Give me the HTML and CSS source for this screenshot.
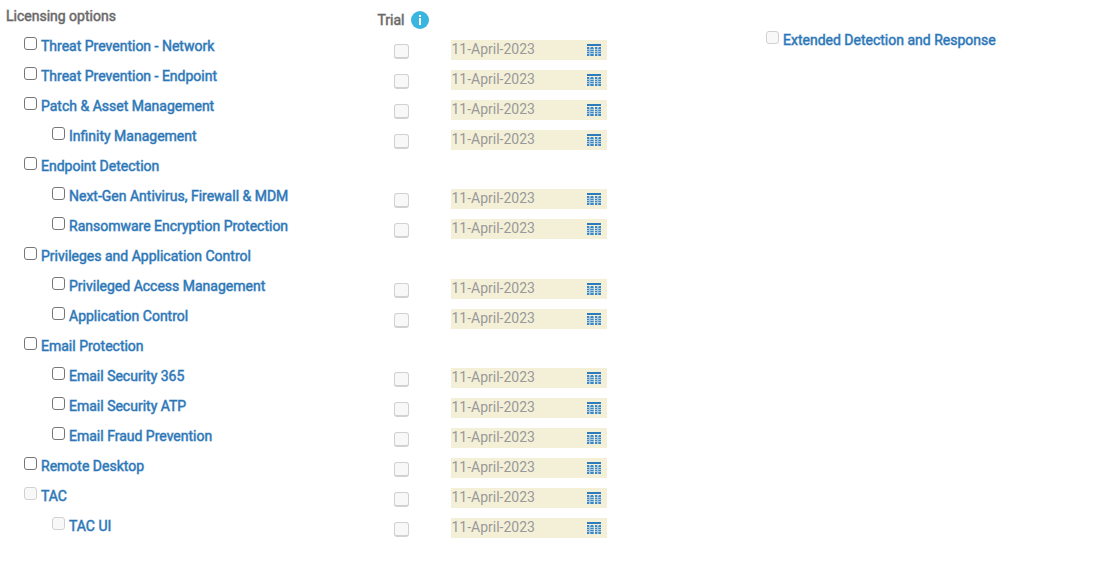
FILE: index.html
```html
<!DOCTYPE html>
<html lang="en">
<head>
<meta charset="utf-8">
<title>Licensing options</title>
<link rel="stylesheet" href="styles.css">
</head>
<body>
<svg class="sprite" aria-hidden="true">
  <symbol id="calendar" viewBox="0 0 14 12">
    <path fill="#a9cbe0" d="M0 3h14v9H0z"/>
    <path fill="#2b7bbd" d="M0 0h14v2H0z"/>
    <path fill="#3d86c2" d="M0 3h2v2H0zM4 3h2v2H4zM8 3h2v2H8zM12 3h2v2h-2zM0 6h2v1H0zM4 6h2v1H4zM8 6h2v1H8zM12 6h2v1h-2zM0 8h2v1H0zM4 8h2v1H4zM8 8h2v1H8zM12 8h2v1h-2zM0 10h2v2H0zM4 10h2v2H4zM8 10h2v2H8zM12 10h2v2h-2z"/>
    <path fill="#6ba3cf" d="M3 4h1v1H3zM6 4h1v1H6zM11 4h1v1h-1zM3 6h1v1H3zM6 6h1v1H6zM11 6h1v1h-1zM3 8h1v1H3zM6 8h1v1H6zM11 8h1v1h-1zM3 10h1v2H3zM6 10h1v2H6zM11 10h1v2h-1z"/>
    <path fill="#f4f0d8" d="M7 3h1v9H7z"/>
  </symbol>
</svg>
<main class="licensing">
  <section class="options">
    <h2 class="heading">Licensing options</h2>
    <ul class="option-list" id="options"></ul>
  </section>
  <section class="trial">
    <h2 class="heading trial-heading">Trial
      <svg class="info" viewBox="0 0 18 18" role="img" aria-label="Information"><circle cx="9" cy="9" r="9" fill="#38b6df"/><path fill="#fff" d="M8 4h2v2H8zM8 7h2v7H8z"/></svg>
    </h2>
    <ul class="trial-list" id="trials"></ul>
  </section>
  <section class="extra">
    <label class="option"><input class="check" type="checkbox" disabled><span>Extended Detection and Response</span></label>
  </section>
</main>
<script src="script.js"></script>
</body>
</html>
```

FILE: styles.css
```css
* { box-sizing: border-box; }
body {
  margin: 0;
  background: #fff;
  color: #666;
  font: 14px/20px Roboto, "Liberation Sans", sans-serif;
}
.sprite { display: none; }
.licensing {
  display: grid;
  grid-template-columns: 33.8% 32.9% 1fr;
  padding: 6px;
}
.heading {
  margin: 0;
  font-size: 14px;
  line-height: 20px;
  font-weight: 400;
  -webkit-text-stroke: 1px rgb(102 102 102 / 50%);
}
.option-list, .trial-list { margin: 0; padding: 0; list-style: none; }
.option-list { padding: 5px 0 0 18px; }
.option-item { height: 30px; padding-top: 6px; line-height: 18px; }
.option-item.child { padding-left: 28px; }
.option {
  display: flex;
  gap: 4px;
  line-height: 18px;
  color: #2a75b6;
  -webkit-text-stroke: 1px rgb(42 117 182 / 50%);
}
.check {
  appearance: none;
  flex: none;
  width: 13px;
  height: 13px;
  margin: 0;
  border: 1px solid #767676;
  border-radius: 3px;
  background: #fff;
}
.check:disabled { border-color: #d1d1d1; background: #f8f8f8; }
.trial-heading { display: flex; align-items: center; gap: 7px; padding-top: 4px; }
.info { width: 18px; height: 18px; }
.trial-list { padding-top: 10px; }
.trial-item { display: flex; height: 30px; padding-left: 17px; gap: 42px; }
.trial-item.short { height: 29px; }
.trial-item .check { width: 15px; height: 15px; margin-top: 4px; border-bottom-width: 2px; }
.date { display: flex; align-items: center; width: 156px; height: 20px; background: #f4f0d8; }
.date-input {
  flex: 1;
  min-width: 0;
  height: 20px;
  padding: 0 0 2px;
  border: 0;
  background: transparent;
  color: #999;
  font: inherit;
}
.date-button { display: flex; margin: 0; padding: 0 6px; border: 0; background: transparent; }
.calendar { width: 14px; height: 12px; }
.extra { padding: 25px 0 0 27px; }
```

FILE: script.js
```js
const options = [
  { name: "Threat Prevention - Network" },
  { name: "Threat Prevention - Endpoint" },
  { name: "Patch & Asset Management" },
  { name: "Infinity Management", child: true },
  { name: "Endpoint Detection", group: true, short: true },
  { name: "Next-Gen Antivirus, Firewall & MDM", child: true },
  { name: "Ransomware Encryption Protection", child: true },
  { name: "Privileges and Application Control", group: true },
  { name: "Privileged Access Management", child: true },
  { name: "Application Control", child: true },
  { name: "Email Protection", group: true, short: true },
  { name: "Email Security 365", child: true },
  { name: "Email Security ATP", child: true },
  { name: "Email Fraud Prevention", child: true },
  { name: "Remote Desktop" },
  { name: "TAC", disabled: true },
  { name: "TAC UI", child: true, disabled: true }
];
const text = (s) => s.replace(/&/g, "&amp;");

document.getElementById("options").innerHTML = options.map((o) => `
  <li class="option-item${o.child ? " child" : ""}">
    <label class="option"><input class="check" type="checkbox"${o.disabled ? " disabled" : ""}><span>${text(o.name)}</span></label>
  </li>`).join("");

document.getElementById("trials").innerHTML = options.map((o) => o.group
  ? `<li class="trial-item${o.short ? " short" : ""}"></li>`
  : `<li class="trial-item">
    <input class="check" type="checkbox" disabled aria-label="Trial of ${text(o.name)}">
    <div class="date">
      <input class="date-input" type="text" value="11-April-2023" disabled aria-label="Trial end for ${text(o.name)}">
      <button class="date-button" type="button" aria-label="Choose date"><svg class="calendar"><use href="#calendar"/></svg></button>
    </div>
  </li>`).join("");
```
